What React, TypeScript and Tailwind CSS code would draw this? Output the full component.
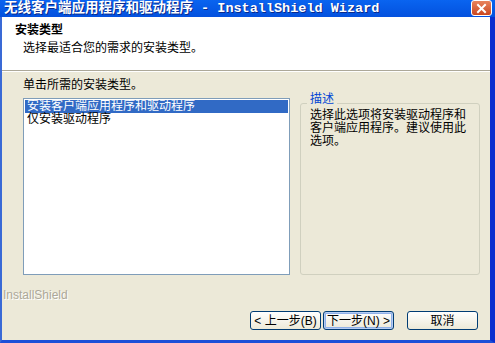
// Role: InstallShield setup-type wizard page (Windows XP look)

import React, { useState } from "react";

const UI_FONT = "font-['Tahoma','Liberation_Sans','Noto_Sans_CJK_SC',sans-serif]";

const OPTIONS = [
  {
    id: "full",
    label: "安装客户端应用程序和驱动程序",
    desc: "选择此选项将安装驱动程序和客户端应用程序。建议使用此选项。",
  },
  {
    id: "driver",
    label: "仅安装驱动程序",
    desc: "选择此选项将仅安装驱动程序。",
  },
];

function XpButton({ children, focused }: { children: React.ReactNode; focused?: boolean }) {
  return (
    <button
      className={`h-[19px] w-[71px] rounded-[3px] border border-[#003c74] bg-gradient-to-b from-white to-[#ece9d8] text-[12px] leading-none text-black ${
        focused ? "shadow-[inset_0_0_0_1px_#b6cdf3,inset_0_0_0_2px_#8fb0e8]" : ""
      }`}
    >
      {children}
    </button>
  );
}

export default function App() {
  /* ===== STATE ===== */
  const [selected, setSelected] = useState("full");
  const current = OPTIONS.find((o) => o.id === selected)!;

  return (
    <div className={`w-[495px] h-[343px] flex flex-col overflow-hidden ${UI_FONT}`}>
      {/* Title bar */}
      <div className="h-[17px] flex items-center justify-between bg-gradient-to-b from-[#0a64f0] to-[#0451de] pl-[4px] pr-[3px]">
        <span className="text-[13.5px] font-bold leading-none text-white whitespace-nowrap font-['Liberation_Mono','Noto_Sans_CJK_SC',monospace] [text-shadow:1px_1px_0_#0a2a8a]">
          无线客户端应用程序和驱动程序 - InstallShield Wizard
        </span>
        <div className="w-[21px] h-[16px] -mt-[1px] rounded-[3px] border border-white bg-gradient-to-b from-[#e8835c] to-[#c9461f] flex items-center justify-center">
          <svg width="11" height="11" viewBox="0 0 11 11">
            <path d="M2 2 L9 9 M9 2 L2 9" stroke="white" strokeWidth="2" strokeLinecap="square" />
          </svg>
        </div>
      </div>

      {/* Window body with frame borders */}
      <div className="flex-1 flex flex-col border-l-2 border-l-[#3a6ad6] border-r-[5px] border-r-[#0a2fcf] border-b-[3px] border-b-[#1c4fd8] bg-[#ece9d8]">
        {/* Header */}
        <div className="h-[54px] bg-white border-b border-b-[#aca899] shadow-[0_1px_0_#ffffff] pl-[13px] pt-[6px]">
          <div className="text-[12px] font-bold leading-[14px] text-black">安装类型</div>
          <div className="mt-[4px] pl-[8px] text-[12px] leading-[14px] text-black">选择最适合您的需求的安装类型。</div>
        </div>

        {/* Content */}
        <div className="flex-1 flex flex-col pl-[21px] pr-[8px] pt-[7px]">
          <div className="text-[12px] leading-[14px] text-black">单击所需的安装类型。</div>
          <div className="mt-[6px] flex gap-[10px]">
            {/* List box */}
            <div className="w-[267px] h-[177px] border border-[#7f9db9] bg-white p-[1px]">
              {OPTIONS.map((o) => (
                <div
                  key={o.id}
                  onClick={() => setSelected(o.id)}
                  className={`h-[13px] pl-[2px] text-[12px] leading-[13px] whitespace-nowrap cursor-default ${
                    selected === o.id ? "bg-[#316ac5] text-white" : "text-black"
                  }`}
                >
                  {o.label}
                </div>
              ))}
            </div>

            {/* Description group box */}
            <div className="relative mt-[5px] w-[180px] h-[172px] rounded-[3px] border border-[#d0d0bf]">
              <span className="absolute -top-[12px] left-[6px] bg-[#ece9d8] px-[3px] text-[12px] leading-[14px] text-[#0046d5]">
                描述
              </span>
              <p className="pl-[9px] pr-[6px] pt-[5px] text-[12px] leading-[13px] text-black">{current.desc}</p>
            </div>
          </div>
        </div>

        {/* Footer */}
        <div className="h-[52px] flex flex-col">
          <div className="pl-[1px] text-[12px] leading-[14px] text-[#aca899] [text-shadow:1px_1px_0_#ffffff]">InstallShield</div>
          <div className="mt-[9px] flex justify-end pr-[12px]">
            <XpButton>&lt; 上一步(B)</XpButton>
            <div className="w-[2px]" />
            <XpButton focused>下一步(N) &gt;</XpButton>
            <div className="w-[13px]" />
            <XpButton>取消</XpButton>
          </div>
        </div>
      </div>
    </div>
  );
}
